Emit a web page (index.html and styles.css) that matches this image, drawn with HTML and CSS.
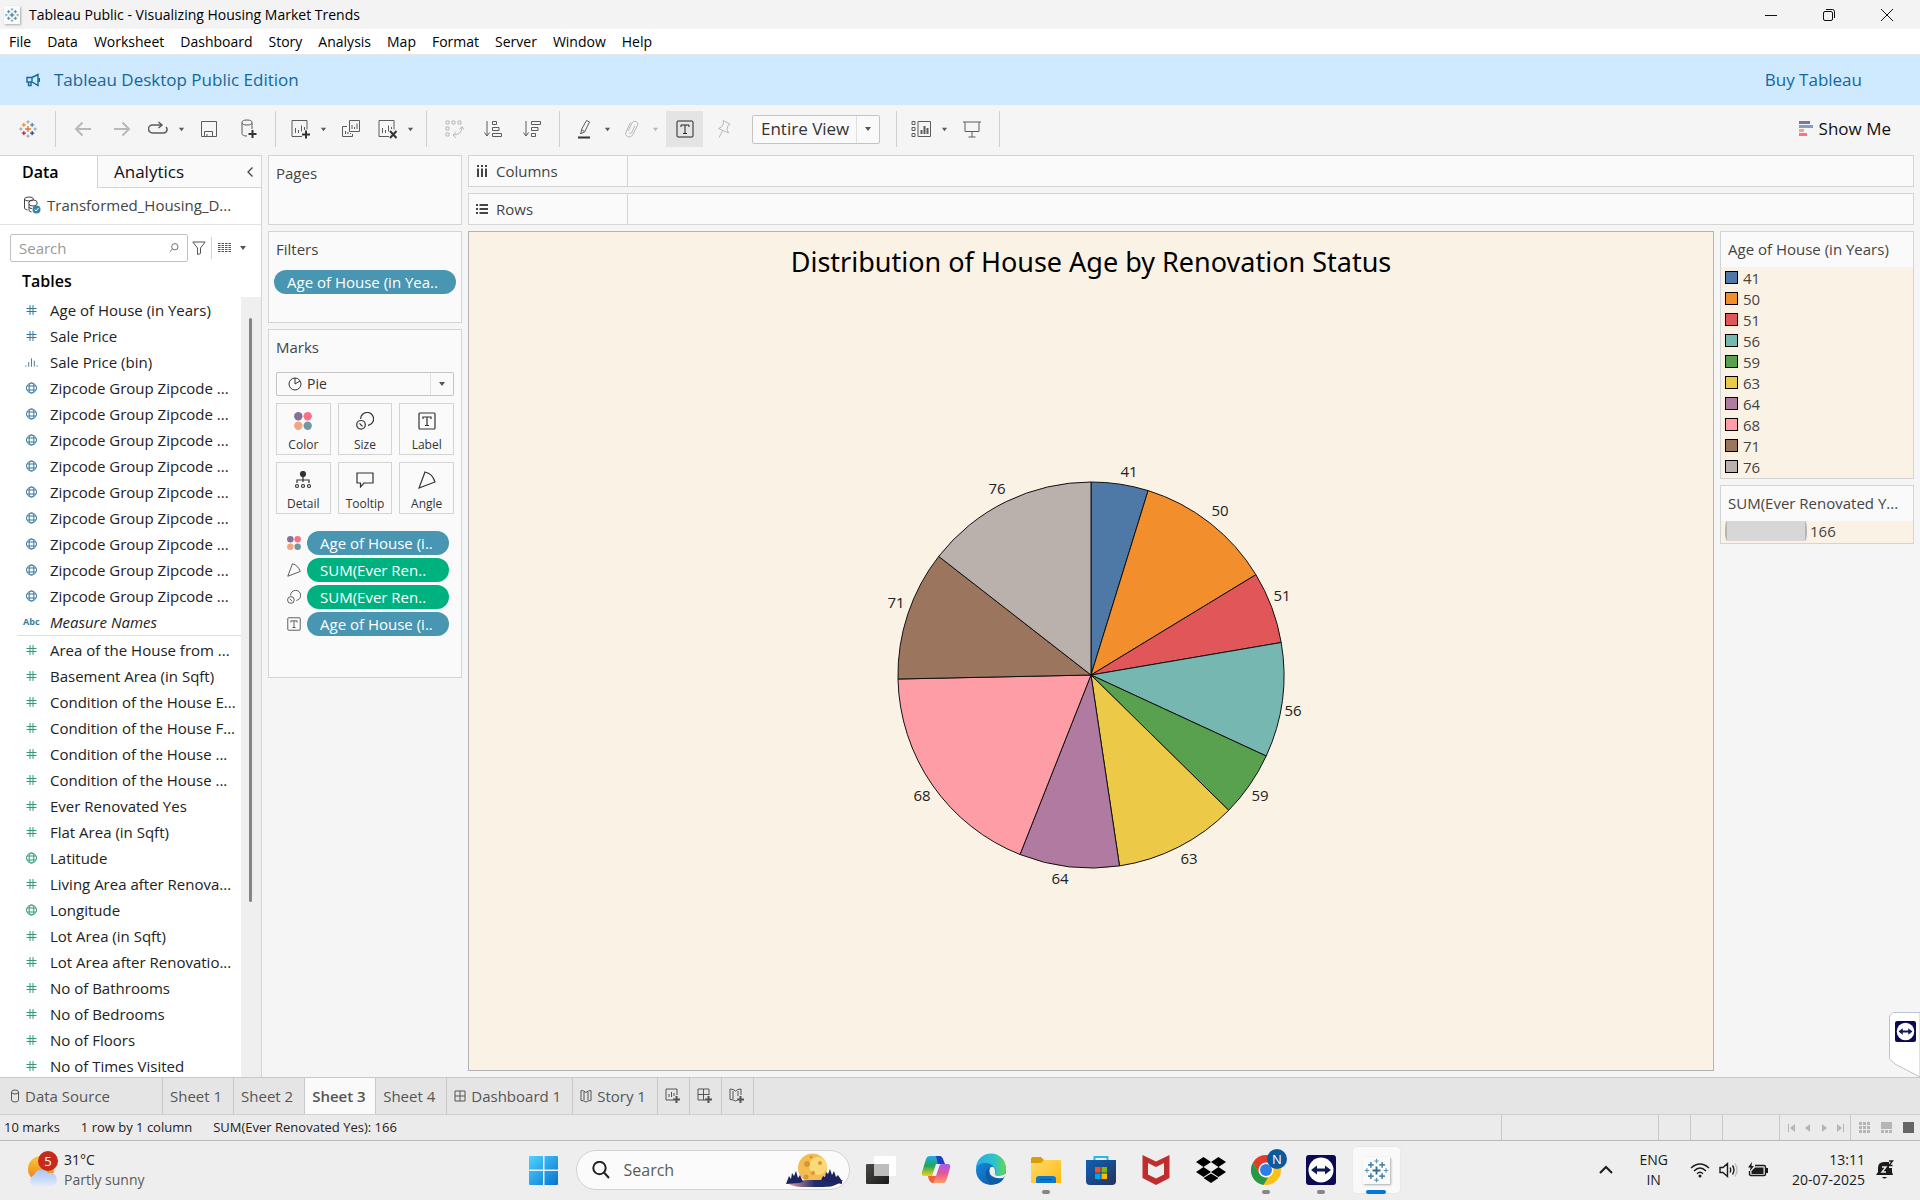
FILE: index.html
```html
<!DOCTYPE html>
<html lang="en">
<head>
<meta charset="utf-8">
<title>Tableau Public - Visualizing Housing Market Trends</title>
<link rel="stylesheet" href="styles.css">
</head>
<body>
<svg class="defs" aria-hidden="true">
  <defs>
    <linearGradient id="win" x1="0" y1="0" x2="1" y2="1"><stop offset="0" stop-color="#4fd3ff"/><stop offset="1" stop-color="#0573d2"/></linearGradient>
    <linearGradient id="sun" x1="0" y1="0" x2="0" y2="1"><stop offset="0" stop-color="#f7c93c"/><stop offset="1" stop-color="#f07a12"/></linearGradient>
    <linearGradient id="cloud" x1="0" y1="0" x2="0" y2="1"><stop offset="0" stop-color="#a9c4f5"/><stop offset="1" stop-color="#dfeafd"/></linearGradient>
    <linearGradient id="cop1" x1="0" y1="0" x2="0" y2="1"><stop offset="0" stop-color="#1faaf0"/><stop offset=".5" stop-color="#23a55a"/><stop offset="1" stop-color="#f5d118"/></linearGradient>
    <linearGradient id="cop2" x1="0" y1="0" x2="0" y2="1"><stop offset="0" stop-color="#a35cf0"/><stop offset=".5" stop-color="#e8559a"/><stop offset="1" stop-color="#fba05c"/></linearGradient>
    <linearGradient id="edge1" x1="0" y1="0" x2="1" y2="0"><stop offset="0" stop-color="#2aa8e8"/><stop offset=".6" stop-color="#2cc3cf"/><stop offset="1" stop-color="#68d64f"/></linearGradient>
    <linearGradient id="edge2" x1="0" y1="0" x2="1" y2="1"><stop offset="0" stop-color="#1591e0"/><stop offset="1" stop-color="#0b4f9e"/></linearGradient>
    <linearGradient id="fold" x1="0" y1="0" x2="1" y2="1"><stop offset="0" stop-color="#ffdc6b"/><stop offset="1" stop-color="#fdb913"/></linearGradient>
    <linearGradient id="store" x1="0" y1="0" x2="1" y2="1"><stop offset="0" stop-color="#0d62b5"/><stop offset="1" stop-color="#25325c"/></linearGradient>
    <linearGradient id="ground" x1="0" y1="0" x2="1" y2="0"><stop offset="0" stop-color="#eda79b"/><stop offset=".5" stop-color="#202c6c"/><stop offset="1" stop-color="#1b2562"/></linearGradient>
    <linearGradient id="dark" x1="0" y1="0" x2="1" y2="1"><stop offset="0" stop-color="#4a4a46"/><stop offset="1" stop-color="#1a1a19"/></linearGradient>
  </defs>
  <symbol id="i-hash" viewBox="0 0 12 12"><path d="M4.500 1v10M7.500 1v10M1 4.500h10M1 7.500h10"/></symbol>
  <symbol id="i-globe" viewBox="0 0 12 12"><circle cx="6" cy="6" r="5"/><ellipse cx="6" cy="6" rx="2.4" ry="5"/><path d="M1.6 4h8.8M1.6 8h8.8"/></symbol>
  <symbol id="i-bin" viewBox="0 0 14 12"><path d="M1 9.5v1.5M4 6v5M7 2v9M10 4.500v6.500M13 9.500v1.500"/></symbol>
  <symbol id="i-down" viewBox="0 0 8 8"><path d="M1 2h6L4 6z"/></symbol>
  <symbol id="i-tableau" viewBox="0 0 24 24">
    <path d="M12 8.500v7M8.500 12h7" stroke="var(--c1)" stroke-width="1.600"/>
    <path d="M7 4.500v5M4.500 7h5" stroke="var(--c2)" stroke-width="1.400"/>
    <path d="M17 4.500v5M14.500 7h5" stroke="var(--c3)" stroke-width="1.400"/>
    <path d="M7 14.500v5M4.500 17h5" stroke="var(--c4)" stroke-width="1.400"/>
    <path d="M17 14.500v5M14.500 17h5" stroke="var(--c5)" stroke-width="1.400"/>
    <path d="M12 1.500v4M10 3.500h4M12 18.500v4M10 20.500h4M3.500 10v4M1.500 12h4M20.500 10v4M18.500 12h4" stroke="var(--c6)"/>
  </symbol>
  <symbol id="i-dots" viewBox="0 0 18 18"><g stroke="none"><circle cx="4.300" cy="4.300" r="4.200" fill="#857097"/><circle cx="13.700" cy="4.300" r="4.200" fill="#fb7083"/><circle cx="4.300" cy="13.700" r="4.200" fill="#f3a681"/><circle cx="13.700" cy="13.700" r="4.200" fill="#6f98a3"/></g></symbol>
  <symbol id="i-size" viewBox="0 0 18 18"><path d="M4.600 7A6.500 6.500 0 1 1 12 13.400"/><circle cx="5" cy="12.800" r="4.300"/><path d="M3.500 11.300l3 3"/></symbol>
  <symbol id="i-label" viewBox="0 0 18 18"><rect x="1" y="1" width="16" height="16" rx="1"/><path d="M5 7V5h8v2M9 5v8.500M7 13.500h4"/></symbol>
  <symbol id="i-detail" viewBox="0 0 18 18"><circle cx="9" cy="3" r="2.500" fill="#333"/><path d="M9 5v6M3 12V9h12v3"/><circle cx="3" cy="15" r="1.500"/><circle cx="9" cy="15" r="1.500"/><circle cx="15" cy="15" r="1.500"/></symbol>
  <symbol id="i-tip" viewBox="0 0 18 18"><path d="M1 2h16v10H8l-3.500 4v-4H1z"/></symbol>
  <symbol id="i-angle" viewBox="0 0 18 18"><path d="M7 1L1 17l16-6C15.500 6 12 2 7 1z"/></symbol>
  <symbol id="i-team" viewBox="0 0 30 30"><rect width="30" height="30" rx="3" fill="#090a52"/><circle cx="15" cy="15" r="12.500" fill="#fff"/><path d="M5 15l6-4.500v3h8v-3l6 4.500-6 4.500v-3h-8v3z" fill="#111a55"/></symbol>
  <symbol id="i-search" viewBox="0 0 18 18"><circle cx="7.500" cy="7" r="6.200"/><path d="M12 11.500l5 5.500"/></symbol>
</svg>

<header class="titlebar">
  <svg class="app-icon blue-logo" viewBox="0 0 24 24"><use href="#i-tableau"/></svg>
  <h1>Tableau Public - Visualizing Housing Market Trends</h1>
  <div class="window-buttons">
    <button aria-label="Minimize"><svg viewBox="0 0 12 12"><path d="M0 6.500h12"/></svg></button>
    <button aria-label="Restore"><svg viewBox="0 0 12 12"><rect x=".5" y="2.500" width="9" height="9" rx="1.500"/><path d="M3 .5h6.500a2 2 0 0 1 2 2V9"/></svg></button>
    <button aria-label="Close"><svg viewBox="0 0 12 12"><path d="M0 0l12 12M12 0L0 12"/></svg></button>
  </div>
</header>
<nav class="menubar">
  <button>File</button><button>Data</button><button>Worksheet</button><button>Dashboard</button><button>Story</button><button>Analysis</button><button>Map</button><button>Format</button><button>Server</button><button>Window</button><button>Help</button>
</nav>
<div class="banner">
  <svg viewBox="0 0 14 14"><path d="M1 4.500h5L12 1.500v11L6 9H1zM2.500 9v3.500h2.500V9M13.500 5v4M6 4.500V9"/></svg>
  <span>Tableau Desktop Public Edition</span>
  <a href="#buy">Buy Tableau</a>
</div>

<div class="toolbar">
  <div class="group"><button aria-label="Start page"><svg class="color-logo" viewBox="0 0 24 24"><use href="#i-tableau"/></svg></button></div>
  <div class="group">
    <button aria-label="Undo" class="off heavy"><svg viewBox="0 0 20 20"><path d="M18 10H3M9.500 3.500L3 10l6.500 6.500"/></svg></button>
    <button aria-label="Redo" class="off heavy"><svg viewBox="0 0 20 20"><path d="M2 10h15M10.500 3.500L17 10l-6.500 6.500"/></svg></button>
    <button aria-label="Replay" class="has-menu mid"><svg viewBox="0 0 20 20"><path d="M13 6H4.500a3.500 3.500 0 0 0 0 8h11a3.500 3.500 0 0 0 2.500-6M10.500 3L14 6l-3.500 3"/></svg><svg class="caret" viewBox="0 0 8 8"><use href="#i-down"/></svg></button>
    <button aria-label="Save"><svg viewBox="0 0 20 20"><path d="M2.500 2.500h15v15h-15zM5.500 17.500v-5h8v5M8 15v2.500"/></svg></button>
    <button aria-label="New data source"><svg viewBox="0 0 20 20"><ellipse cx="9" cy="3.500" rx="5" ry="2.500"/><path d="M4 3.500v11q0 2.500 5 2.500M14 3.500V10"/><path class="strong" d="M14.500 11v8M10.500 15h8"/></svg></button>
  </div>
  <div class="group">
    <button aria-label="New worksheet" class="has-menu"><svg viewBox="0 0 20 20"><path d="M12 17.500H2v-16h15v9M5.500 9v5M8.500 11v3M11.500 6.500v6M14.500 8v3"/><path class="strong" d="M16 11.500v8M12 15.500h8"/></svg><svg class="caret" viewBox="0 0 8 8"><use href="#i-down"/></svg></button>
    <button aria-label="Duplicate"><svg viewBox="0 0 20 20"><path d="M8.500 1.500h10v11h-10zM6 7.500H1.500v10h10V15M11 6v4M13.500 8v2M16 4.500V10M4.500 12v3M7 13v2M9.500 14v1"/></svg></button>
    <button aria-label="Clear sheet" class="has-menu"><svg viewBox="0 0 20 20"><path d="M12 17.500H2v-16h15v9M5.500 9v5M8.500 11v3M11.500 6.500v6M14.500 8v2"/><path class="strong" d="M13 12l6.500 7M19.500 12L13 19"/></svg><svg class="caret" viewBox="0 0 8 8"><use href="#i-down"/></svg></button>
  </div>
  <div class="group">
    <button aria-label="Swap rows and columns" class="off"><svg viewBox="0 0 20 20"><path d="M2 2h3v3H2zM8 2h3v3H8zM14 2h3v3h-3zM2 8h3v3H2zM2 14h3v3H2zM18 8q0 8-9 8M12 13l-3 3 3 3M15.500 10.500l2.500-3 2 3"/></svg></button>
    <button aria-label="Sort ascending"><svg viewBox="0 0 20 20"><path d="M4 2v15M1.500 13.500L4 17l2.500-3.500M9.500 2.500h4v3h-4zM9.500 8.500h6.500v3H9.500zM9.500 14.500h9v3h-9z"/></svg></button>
    <button aria-label="Sort descending"><svg viewBox="0 0 20 20"><path d="M4 2v15M1.500 13.500L4 17l2.500-3.500M9.500 2.500h9v3h-9zM9.500 8.500h6.500v3H9.500zM9.500 14.500h4v3h-4z"/></svg></button>
  </div>
  <div class="group">
    <button aria-label="Highlight" class="has-menu"><svg viewBox="0 0 20 20"><path d="M12.500 1.500l3 1.500-5 10-3.500 1.500.5-4zM7.500 10.500l3 2M6 15l1-1"/><path class="strong" d="M4 18.500h12"/></svg><svg class="caret" viewBox="0 0 8 8"><use href="#i-down"/></svg></button>
    <button aria-label="Group members" class="has-menu off"><svg viewBox="0 0 20 20"><path d="M6 12l4-8a3 3 0 0 1 5.500 2.500L10.500 16A3.500 3.500 0 0 1 4 13l4.500-9.500M7 13.500a1.500 1.500 0 0 0 2.500.5L13 6.500"/></svg><svg class="caret" viewBox="0 0 8 8"><use href="#i-down"/></svg></button>
    <button aria-label="Show mark labels" aria-pressed="true" class="pressed"><svg viewBox="0 0 18 18"><use href="#i-label"/></svg></button>
    <button aria-label="Fix axes" class="off"><svg viewBox="0 0 20 20"><path d="M10 1.500l7 3.500-2 1.500-1 4 1.500 3.500-10-4.500 3-1.500 2-4zM9.500 12L6 18.500"/></svg></button>
    <label class="select fit"><select aria-label="Fit"><option>Entire View</option></select><svg viewBox="0 0 8 8"><use href="#i-down"/></svg></label>
  </div>
  <div class="group">
    <button aria-label="Show or hide cards" class="has-menu"><svg viewBox="0 0 20 20"><path d="M7 2.500h12.500v15H7zM1 2.500h3v3H1zM1 8.500h3v3H1zM1 14.500h3v3H1z"/><path class="thick" d="M10.500 11v4M13.500 7v8M16.500 9v6"/></svg><svg class="caret" viewBox="0 0 8 8"><use href="#i-down"/></svg></button>
    <button aria-label="Presentation mode"><svg viewBox="0 0 20 20"><path d="M1 3h18M3 3v9.500h14V3M10 12.500V18M6.500 18h7"/></svg></button>
  </div>
  <button class="show-me"><svg viewBox="0 0 14 16"><path fill="#857097" d="M0 0h11v3H0z"/><path fill="#7da0cc" d="M0 4h14v3H0z"/><path fill="#f3a681" d="M0 8h5v3H0z"/><path fill="#fb7083" d="M0 12h8v3H0z"/></svg>Show Me</button>
</div>

<main class="workspace">
  <aside class="data-pane">
    <div class="pane-tabs">
      <button class="active">Data</button>
      <button>Analytics<svg viewBox="0 0 8 12"><path d="M6.500 1.500L2 6l4.500 4.500"/></svg></button>
    </div>
    <div class="source">
      <svg viewBox="0 0 18 18"><ellipse cx="6" cy="3" rx="4.500" ry="2"/><path d="M1.500 3v9q0 1.500 3 2M6 8q0 2 4 2t4-2V6q0-2-4-2T6 6v8q0 1.500 2.500 2M6 11q0 1.500 3 1.500"/><circle cx="13.500" cy="13.500" r="4" fill="#3a83a8" stroke="none"/><path d="M11.500 13.500l1.500 1.500 2.500-3" stroke="#fff"/></svg>
      <span>Transformed_Housing_D...</span>
    </div>
    <div class="find">
      <div class="find-box"><input type="text" placeholder="Search" aria-label="Search fields"><svg viewBox="0 0 12 12"><circle cx="7" cy="4.500" r="3.800"/><path d="M4.300 7.200L.8 10.700"/></svg></div>
      <button aria-label="Filter fields"><svg viewBox="0 0 14 14"><path d="M.8 1h12.400L8.500 7v5.500l-3 1V7z"/></svg></button>
      <button aria-label="View options" class="views"><svg viewBox="0 0 13 10"><path stroke-dasharray="2.500 1" d="M0 .5h13M0 2.500h13M0 4.500h13M0 6.500h13M0 8.500h13"/></svg><svg class="caret" viewBox="0 0 8 8"><use href="#i-down"/></svg></button>
    </div>
    <h2>Tables</h2>
    <div class="field-area">
      <div class="fields">
        <ul class="dimensions">
          <li><svg><use href="#i-hash"/></svg>Age of House (in Years)</li>
          <li><svg><use href="#i-hash"/></svg>Sale Price</li>
          <li><svg><use href="#i-bin"/></svg>Sale Price (bin)</li>
          <li><svg><use href="#i-globe"/></svg>Zipcode Group Zipcode ...</li>
          <li><svg><use href="#i-globe"/></svg>Zipcode Group Zipcode ...</li>
          <li><svg><use href="#i-globe"/></svg>Zipcode Group Zipcode ...</li>
          <li><svg><use href="#i-globe"/></svg>Zipcode Group Zipcode ...</li>
          <li><svg><use href="#i-globe"/></svg>Zipcode Group Zipcode ...</li>
          <li><svg><use href="#i-globe"/></svg>Zipcode Group Zipcode ...</li>
          <li><svg><use href="#i-globe"/></svg>Zipcode Group Zipcode ...</li>
          <li><svg><use href="#i-globe"/></svg>Zipcode Group Zipcode ...</li>
          <li><svg><use href="#i-globe"/></svg>Zipcode Group Zipcode ...</li>
          <li><b>Abc</b><i>Measure Names</i></li>
        </ul>
        <ul class="measures">
          <li><svg><use href="#i-hash"/></svg>Area of the House from ...</li>
          <li><svg><use href="#i-hash"/></svg>Basement Area (in Sqft)</li>
          <li><svg><use href="#i-hash"/></svg>Condition of the House E...</li>
          <li><svg><use href="#i-hash"/></svg>Condition of the House F...</li>
          <li><svg><use href="#i-hash"/></svg>Condition of the House ...</li>
          <li><svg><use href="#i-hash"/></svg>Condition of the House ...</li>
          <li><svg><use href="#i-hash"/></svg>Ever Renovated Yes</li>
          <li><svg><use href="#i-hash"/></svg>Flat Area (in Sqft)</li>
          <li><svg><use href="#i-globe"/></svg>Latitude</li>
          <li><svg><use href="#i-hash"/></svg>Living Area after Renova...</li>
          <li><svg><use href="#i-globe"/></svg>Longitude</li>
          <li><svg><use href="#i-hash"/></svg>Lot Area (in Sqft)</li>
          <li><svg><use href="#i-hash"/></svg>Lot Area after Renovatio...</li>
          <li><svg><use href="#i-hash"/></svg>No of Bathrooms</li>
          <li><svg><use href="#i-hash"/></svg>No of Bedrooms</li>
          <li><svg><use href="#i-hash"/></svg>No of Floors</li>
          <li><svg><use href="#i-hash"/></svg>No of Times Visited</li>
        </ul>
      </div>
      <div class="scroll-track"><div class="scroll-thumb"></div></div>
    </div>
  </aside>

  <section class="cards">
    <div class="card pages"><h3>Pages</h3></div>
    <div class="card filters"><h3>Filters</h3><button class="pill">Age of House (in Yea..</button></div>
    <div class="card marks">
      <h3>Marks</h3>
      <label class="select mark-type"><svg class="pie-glyph" viewBox="0 0 14 14"><circle cx="7" cy="7" r="6"/><path d="M7 7V1M7 7l5-3"/></svg><select aria-label="Mark type"><option>Pie</option></select><svg viewBox="0 0 8 8"><use href="#i-down"/></svg></label>
      <div class="mark-buttons">
        <button><svg><use href="#i-dots"/></svg>Color</button>
        <button><svg><use href="#i-size"/></svg>Size</button>
        <button><svg><use href="#i-label"/></svg>Label</button>
        <button><svg><use href="#i-detail"/></svg>Detail</button>
        <button><svg><use href="#i-tip"/></svg>Tooltip</button>
        <button><svg><use href="#i-angle"/></svg>Angle</button>
      </div>
      <ul class="encodings">
        <li><svg><use href="#i-dots"/></svg><button class="pill">Age of House (i..</button></li>
        <li><svg><use href="#i-angle"/></svg><button class="pill green">SUM(Ever Ren..</button></li>
        <li><svg><use href="#i-size"/></svg><button class="pill green">SUM(Ever Ren..</button></li>
        <li><svg><use href="#i-label"/></svg><button class="pill">Age of House (i..</button></li>
      </ul>
    </div>
  </section>

  <section class="view">
    <div class="shelf"><div class="shelf-name"><svg viewBox="0 0 12 12"><path d="M2 0v2M6 0v2M10 0v2M2 3.500V12M6 3.500V12M10 3.500V12"/></svg>Columns</div></div>
    <div class="shelf"><div class="shelf-name"><svg viewBox="0 0 12 12"><path d="M0 2h2M0 6h2M0 10h2M3.500 2H12M3.500 6H12M3.500 10H12"/></svg>Rows</div></div>
    <div class="view-body">
      <div class="canvas">
        <h2>Distribution of House Age by Renovation Status</h2>
        <div class="plot">
          <svg class="pie" viewBox="-220 -220 440 440" role="img" aria-label="Pie chart of house age by renovation status">
            <g class="slices">
              <path fill="#4e79a7" d="M0 0V-193A193 193 0 0 1 57.100-184.400z"/>
              <path fill="#f28e2b" d="M0 0L57.100-184.400A193 193 0 0 1 164.900-100.300z"/>
              <path fill="#e15759" d="M0 0L164.900-100.300A193 193 0 0 1 190.200-32.500z"/>
              <path fill="#76b7b2" d="M0 0L190.200-32.500A193 193 0 0 1 175.200 81z"/>
              <path fill="#59a14f" d="M0 0L175.200 81A193 193 0 0 1 137.700 135.300z"/>
              <path fill="#edc948" d="M0 0L137.700 135.300A193 193 0 0 1 28.500 190.900z"/>
              <path fill="#b07aa1" d="M0 0L28.500 190.900A193 193 0 0 1-71 179.500z"/>
              <path fill="#ff9da7" d="M0 0L-71 179.500A193 193 0 0 1-193 4z"/>
              <path fill="#9c755f" d="M0 0L-193 4A193 193 0 0 1-152.300-118.600z"/>
              <path fill="#bab0ac" d="M0 0L-152.300-118.600A193 193 0 0 1 0-193z"/>
            </g>
            <g class="labels">
              <text x="38" y="-198">41</text><text x="129" y="-159">50</text><text x="191" y="-74">51</text><text x="202" y="41">56</text><text x="169" y="126">59</text><text x="98" y="189">63</text><text x="-31" y="209">64</text><text x="-169" y="126">68</text><text x="-195" y="-67">71</text><text x="-94" y="-181">76</text>
            </g>
          </svg>
        </div>
      </div>
      <aside class="legends">
        <div class="legend">
          <h3>Age of House (in Years)</h3>
          <ul>
            <li><i class="s41"></i>41</li><li><i class="s50"></i>50</li><li><i class="s51"></i>51</li><li><i class="s56"></i>56</li><li><i class="s59"></i>59</li><li><i class="s63"></i>63</li><li><i class="s64"></i>64</li><li><i class="s68"></i>68</li><li><i class="s71"></i>71</li><li><i class="s76"></i>76</li>
          </ul>
        </div>
        <div class="legend">
          <h3>SUM(Ever Renovated Y...</h3>
          <div class="size-key"><span></span>166</div>
        </div>
      </aside>
    </div>
  </section>
  <button class="dock-tab" aria-label="TeamViewer"><svg class="dock-shape" viewBox="0 0 31 65"><path d="M31 .5H4L.5 4v43L6 52l25 13z"/></svg><svg class="dock-icon" viewBox="0 0 30 30"><use href="#i-team"/></svg></button>
</main>

<nav class="sheet-tabs">
  <button class="wide"><svg viewBox="0 0 12 14"><ellipse cx="6" cy="3" rx="3.500" ry="2"/><path d="M2.500 3v8q0 2 3.500 2t3.500-2V3"/></svg>Data Source</button>
  <button>Sheet 1</button><button>Sheet 2</button><button class="active">Sheet 3</button><button>Sheet 4</button>
  <button><svg viewBox="0 0 12 14"><path d="M1 2h10v10H1zM6 2v10M1 7h10"/></svg>Dashboard 1</button>
  <button><svg viewBox="0 0 12 14"><path d="M1 1.500q3 0 5 2 2-2 5-2v10q-3 0-5 1.500-2-1.500-5-1.500zM4 3v8M8 3v8"/></svg>Story 1</button>
  <button class="new" aria-label="New worksheet"><svg viewBox="0 0 16 16"><path d="M8 12H1V1h11v6M4 6v3M6.500 4v5M9 5v3"/><path class="strong" d="M11.500 8v7M8 11.500h7"/></svg></button>
  <button class="new" aria-label="New dashboard"><svg viewBox="0 0 16 16"><path d="M8 12H1V1h11v6M6.500 1v11M1 6.500h11"/><path class="strong" d="M11.500 8v7M8 11.500h7"/></svg></button>
  <button class="new" aria-label="New story"><svg viewBox="0 0 16 16"><path d="M8 12.500q-1 0-1.500.5-2-1.500-5.500-1.500V1q3.500 0 5.500 2 2-2 5.500-2v6M4 3v8M9 3v5"/><path class="strong" d="M11.500 8v7M8 11.500h7"/></svg></button>
</nav>
<footer class="status">
  <span>10 marks</span><span>1 row by 1 column</span><span>SUM(Ever Renovated Yes): 166</span>
  <div class="status-cells">
    <div class="c1"></div><div class="c2"></div><div class="c2"></div><div class="c3"></div>
    <div class="pager">
      <button aria-label="First"><svg viewBox="0 0 8 8"><path d="M0 0h1v8H0zM7 0v8L2 4z"/></svg></button><button aria-label="Previous"><svg viewBox="0 0 8 8"><path d="M6 0v8L1 4z"/></svg></button><button aria-label="Next"><svg viewBox="0 0 8 8"><path d="M2 0v8l5-4z"/></svg></button><button aria-label="Last"><svg viewBox="0 0 8 8"><path d="M7 0h1v8H7zM1 0v8l5-4z"/></svg></button>
    </div>
    <div class="sorter">
      <button aria-label="Sheet sorter"><svg viewBox="0 0 11 11"><path d="M0 0h3v3H0zM4 0h3v3H4zM8 0h3v3H8zM0 4h3v3H0zM4 4h3v3H4zM8 4h3v3H8zM0 8h3v3H0zM4 8h3v3H4zM8 8h3v3H8z"/></svg></button><button aria-label="Filmstrip"><svg viewBox="0 0 11 11"><path d="M0 0h11v7H0zM0 8h3v3H0zM4 8h3v3H4zM8 8h3v3H8z"/></svg></button><button class="on" aria-label="Tabs"><svg viewBox="0 0 11 11"><path d="M0 0h11v11H0z"/></svg></button>
    </div>
  </div>
</footer>

<div class="taskbar">
  <button class="weather">
    <svg viewBox="0 0 34 40"><circle cx="14" cy="19" r="13" fill="url(#sun)"/><path d="M7 36a6 6 0 0 1 0-11 8 8 0 0 1 14-2 6.500 6.500 0 0 1 4 13z" fill="url(#cloud)"/><circle cx="21" cy="11" r="10" fill="#c42b1c"/><text x="21" y="16">5</text></svg>
    <span><b>31°C</b><small>Partly sunny</small></span>
  </button>
  <div class="apps">
    <button aria-label="Start"><svg viewBox="0 0 30 30"><path fill="url(#win)" d="M0 2a1 1 0 0 1 1-1h13v13.500H0zM15.500 1H28a1 1 0 0 1 1 1v12.500H15.500zM0 16h14v14H1a1 1 0 0 1-1-1zM15.500 16H29v13a1 1 0 0 1-1 1H15.500z"/></svg></button>
    <label class="task-search"><svg class="glass" viewBox="0 0 18 18"><use href="#i-search"/></svg><input type="text" placeholder="Search" aria-label="Search Windows">
      <svg class="moon" viewBox="0 0 57 34"><circle cx="26.500" cy="15" r="14.500" fill="#f3bd52"/><circle cx="32" cy="13" r="9" fill="#fbd878"/><g fill="#d99538"><circle cx="21" cy="11" r="3"/><circle cx="34" cy="10" r="2"/><circle cx="27" cy="20" r="2"/><circle cx="25" cy="4" r="1.500"/><circle cx="20" cy="24" r="2.500"/></g><path fill="url(#ground)" d="M1 30q8-3 24-3h32q-4 4-12 6.500-12 1-28 .5-10 0-16-4z"/><path fill="#1b2461" d="M0 31l3-8 2 3 1-6 2 3 2-5 2 7 2-3 3 7-4 1zM35 27l2-4 2 1 1-5 2 2 2-5 2 6 2-4 2 6 2-2 4 6v3z"/></svg>
    </label>
    <button aria-label="Task view"><svg viewBox="0 0 30 30"><rect x="0" y="9" width="23" height="20" rx="1" fill="url(#dark)"/><rect x="8" y="1" width="22" height="20" rx="1" fill="#fff"/><path d="M8 9h15v12H8z" fill="#bdbdbd"/></svg></button>
    <button aria-label="Copilot"><svg viewBox="0 0 30 30"><path fill="url(#cop1)" d="M9 1h11l-5 17q-1 3-4 3H3q-3 0-2-4L5 4q1-3 4-3z"/><path fill="#1f3fc4" d="M15 1h3q3 0 4 3l2 5h-7z"/><path fill="url(#cop2)" d="M22 9h5q3 0 2 4l-3.500 12q-1 3-4 3H11l5.500-16q1-3 5.500-3z"/><path fill="#f2603d" d="M7 21h8l-3 7q-4 0-5-7z"/><path fill="#f0f2f6" d="M15 9h4l-4 12h-4z"/></svg></button>
    <button aria-label="Edge"><svg viewBox="0 0 30 30"><circle cx="15" cy="15" r="15" fill="url(#edge2)"/><path fill="url(#edge1)" d="M0 13A15 15 0 0 1 30 14q0 7-7 7-5 0-4-3 2-3-1-6-3-4-9-4-6 0-9 5z"/><path fill="#0a5ba8" d="M10 17q-1 8 6 12 8 1 12-6-10 4-14-2-2-4 0-8-4 1-4 4z"/><path fill="#eee" d="M14 13q2-2 4-.5 2 2.500 1 5.500-1 3 4 3 4 0 7-3-1 4-3 5-10 1-13-4-1-4 0-6z"/></svg></button>
    <button aria-label="File Explorer" class="running"><svg viewBox="0 0 30 30"><path fill="#dc9c07" d="M0 4q0-2 2-2h8l3 3h16v5H0z"/><path fill="url(#fold)" d="M0 8h10l3-3h16a1 1 0 0 1 1 1v22H0z"/><path fill="#0f79c9" d="M5 28v-4q0-3 3-3h14q3 0 3 3v4z"/><path stroke="#0a4d8a" d="M9 24.500h12"/></svg></button>
    <button aria-label="Microsoft Store"><svg viewBox="0 0 30 30"><path fill="none" stroke="#28b8ea" stroke-width="2" d="M8.500 6V2h13v4"/><path fill="url(#store)" d="M0 5h30v21q0 4-4 4H4q-4 0-4-4z"/><path fill="#f25022" d="M9 12h5.500v5.500H9z"/><path fill="#7fba00" d="M15.500 12H21v5.500h-5.500z"/><path fill="#00a4ef" d="M9 18.500h5.500V24H9z"/><path fill="#ffb900" d="M15.500 18.500H21V24h-5.500z"/></svg></button>
    <button aria-label="McAfee"><svg viewBox="0 0 30 30"><path fill="#c12c2c" fill-rule="evenodd" d="M1.500 0L15 6.500 28.500 0v23L15 30 1.500 23zM7 8v11.500l8 4 8-4V8l-8 4z"/></svg></button>
    <button aria-label="Dropbox"><svg viewBox="0 0 30 30"><path fill="#000" d="M7.500 2L15 7l-7.500 5L0 7zM22.500 2L30 7l-7.500 5L15 7zM7.500 12l7.500 5-7.500 5L0 17zM22.500 12l7.500 5-7.500 5-7.500-5zM15 18.500l7.500 4.500L15 28l-7.500-5z"/></svg></button>
    <button aria-label="Chrome" class="running"><svg class="spill" viewBox="0 0 30 30"><circle cx="15" cy="15" r="15" fill="#fbc116"/><path fill="#e33b2e" d="M2 7.500A15 15 0 0 1 28 7.500H15L8.500 19z"/><path fill="#279847" d="M2 7.500l6.500 11.300L15 22.500h2L12.500 30A15 15 0 0 1 2 7.500z"/><circle cx="15" cy="15" r="7.500" fill="#fff"/><circle cx="15" cy="15" r="6" fill="#2f7de8"/><circle cx="26" cy="4" r="10" fill="#0d599d"/><text x="26" y="9">N</text></svg></button>
    <button aria-label="TeamViewer" class="running"><svg viewBox="0 0 30 30"><use href="#i-team"/></svg></button>
    <button aria-label="Tableau" class="running current"><svg class="blue-logo" viewBox="0 0 24 24"><use href="#i-tableau"/></svg></button>
  </div>
  <div class="tray">
    <button aria-label="Hidden icons"><svg viewBox="0 0 14 14"><path d="M1 10l6-6 6 6"/></svg></button>
    <button class="lang">ENG<br>IN</button>
    <button class="quick" aria-label="Network, sound, battery">
      <svg viewBox="0 0 20 16"><path d="M1 6q9-8 18 0M4 9q6-6 12 0M7 11.800q3-3 6 0"/><circle cx="10" cy="14" r="1.500" fill="#1b1b1b" stroke="none"/></svg>
      <svg viewBox="0 0 20 16"><path d="M1 5.500h3L8.500 1.500v13L4 10.500H1zM11 5.500q1.500 2.500 0 5M13.500 3.500q3 4.500 0 9"/><path stroke="#bbb" d="M16 1.500q4 6.500 0 13"/></svg>
      <svg viewBox="0 0 20 16"><path d="M7 3.500h9q1.500 0 1.500 1.500v7q0 1.500-1.500 1.500H3Q1.500 13.500 1.500 12V9"/><path fill="#1b1b1b" stroke="none" d="M7 5.500h8.500v6.500h-12V9zM18 6h2v5h-2zM4 0L0 5.500h2.500L2 9l4-5H3.500z"/></svg>
    </button>
    <button class="clock">13:11<br>20-07-2025</button>
    <button aria-label="Notifications"><svg viewBox="0 0 18 20"><path fill="#1b1b1b" stroke="none" d="M0 15l2-3V8q0-6 6-6h5v6h3v4l1 3zM6 17h5q-2.500 3-5 0z"/><path stroke="#eee" d="M6 7h4l-4 5h4"/><path d="M13 1h3.500L13 5.500h3.500"/></svg></button>
  </div>
</div>
</body>
</html>
```

FILE: styles.css
```css
* { box-sizing: border-box; }
:root {
  --ui: "Open Sans", "Noto Sans", sans-serif;
  --line: #d4d4d4;
  --cream: #faf3e5;
}
body {
  margin: 0;
  height: 100vh;
  display: flex;
  flex-direction: column;
  overflow: hidden;
  background: #f5f5f5;
  color: #333;
  font: 400 15px/20px var(--ui);
}
h1, h2, h3, ul { margin: 0; padding: 0; font-size: inherit; font-weight: inherit; list-style: none; }
button, input, select {
  margin: 0;
  padding: 0;
  border: 0;
  background: none;
  color: inherit;
  font: inherit;
}
svg { display: block; flex: none; fill: none; stroke: currentColor; }
.defs { position: absolute; width: 0; height: 0; }
#i-down path { fill: currentColor; stroke: none; }

.blue-logo { --c1: #2f6c98; --c2: #4b86ab; --c3: #4b86ab; --c4: #4b86ab; --c5: #4b86ab; --c6: #5c94b6; background: #fafafa; box-shadow: 1px 1px 2px #aaa; }
.color-logo { --c1: #eb7129; --c2: #eb912c; --c3: #59879b; --c4: #c72037; --c5: #1f457e; --c6: #7b91a9; }

.titlebar { display: flex; align-items: center; height: 29px; padding: 0 4px; background: #f3f3f3; flex: none; }
.app-icon { width: 16px; height: 18px; }
.titlebar h1 { flex: 1; margin-left: 9px; color: #000; font-size: 14px; }
.window-buttons { display: flex; }
.window-buttons button { width: 58px; height: 29px; display: grid; place-items: center; color: #111; }
.window-buttons svg { width: 12px; height: 12px; }

.menubar { display: flex; gap: 16px; height: 26px; padding: 0 9px; align-items: center; background: #fff; border-bottom: 1px solid #e6e6e6; color: #000; font-size: 14px; flex: none; }

.banner { display: flex; align-items: center; height: 50px; padding: 0 58px 0 26px; background: #cfe9ff; color: #13689b; font-size: 17px; flex: none; }
.banner svg { width: 14px; height: 14px; margin-right: 14px; stroke-width: 1.4; }
.banner span { flex: 1; }
.banner a { color: inherit; text-decoration: none; }

.toolbar { display: flex; align-items: center; height: 50px; padding-bottom: 2px; flex: none; color: #5c5c5c; }
.group { display: flex; align-items: center; height: 36px; border-right: 1px solid #d0d0d0; padding: 0 8px 0 7px; }
.group:first-child { padding-left: 8px; }
.toolbar .group > button { width: 39px; height: 36px; display: flex; align-items: center; justify-content: center; }
.toolbar .group > button svg { width: 20px; height: 20px; }
.toolbar .group > .has-menu { width: 48px; gap: 10px; padding-left: 7px; justify-content: flex-start; }
.toolbar .group > .has-menu .caret, .caret { width: 7px; height: 7px; }
.toolbar .off { color: #b9b9b9; }
.toolbar .heavy svg { stroke-width: 2; }
.toolbar .mid svg { stroke-width: 1.5; }
.toolbar .color-logo { width: 22px; height: 22px; }
.strong { stroke: #333; stroke-width: 2; }
.thick { stroke-width: 2; }
.toolbar .group > .pressed { width: 37px; margin-left: 3px; background: #e4e4e4; color: #222; }
.toolbar .group > .pressed svg { width: 18px; height: 18px; }
.select { position: relative; display: flex; align-items: center; border: 1px solid #c4c4c4; border-radius: 2px; background: #fafafa; color: #333; }
.select select { appearance: none; flex: 1; height: 100%; min-width: 0; }
.select svg:last-child { width: 8px; height: 8px; margin: 0 7px; color: #555; }
.fit { width: 128px; height: 29px; margin: 0 8px 0 10px; font-size: 17px; }
.fit select { padding-left: 8px; border-right: 1px solid #e0e0e0; }
.show-me { display: flex; align-items: center; gap: 6px; margin: 0 29px 0 auto; color: #111; font-size: 17px; }
.show-me svg { width: 14px; height: 16px; stroke: none; }

.workspace { position: relative; flex: 1; min-height: 0; display: flex; gap: 6px; padding-right: 6px; }
.data-pane { width: 262px; flex: none; display: flex; flex-direction: column; background: #fff; border: 1px solid var(--line); border-left: 0; border-bottom: 0; min-height: 0; }
.pane-tabs { display: flex; height: 32px; flex: none; color: #111; font-size: 17px; }
.pane-tabs button { flex: 1; display: flex; align-items: center; justify-content: space-between; padding: 0 7px 0 16px; border: 1px solid var(--line); border-width: 0 0 1px 1px; background: #fafafa; }
.pane-tabs .active { flex: 0 0 97px; padding: 0 0 1px 22px; border: 0; background: none; color: #000; font-size: 16px; font-weight: 600; }
.pane-tabs svg { width: 8px; height: 12px; stroke-width: 1.3; color: #444; }
.source { display: flex; align-items: center; gap: 6px; height: 37px; padding: 0 0 2px 23px; border-bottom: 1px solid #e2e2e2; color: #444; flex: none; }
.source svg { width: 18px; height: 18px; }
.find { display: flex; align-items: center; height: 46px; padding: 0 14px 0 10px; gap: 4px; flex: none; color: #555; }
.find-box { display: flex; align-items: center; width: 178px; height: 28px; padding: 0 8px; border: 1px solid #c2c2c2; border-radius: 2px; }
.find-box input { flex: 1; min-width: 0; outline: 0; }
.find-box svg { width: 10px; height: 10px; }
::placeholder { color: #999; opacity: 1; }
.find button svg { width: 14px; height: 14px; }
.find .views { display: flex; align-items: center; gap: 8px; height: 22px; margin-left: 1px; padding-left: 6px; border-left: 1px solid var(--line); }
.find .views svg { width: 13px; height: 10px; }
.find .views .caret { width: 8px; height: 8px; }
.data-pane h2 { height: 26px; padding: 0 22px; color: #000; font-size: 16px; font-weight: 600; line-height: 20px; flex: none; }
.field-area { flex: 1; min-height: 0; display: flex; }
.fields { flex: 1; min-width: 0; padding-left: 18px; overflow: hidden; color: #222; }
.fields li { display: flex; align-items: center; gap: 12px; height: 26px; padding-left: 7px; white-space: nowrap; }
.fields li svg { width: 13px; height: 12px; }
.fields li b { width: 17px; margin: 0 -2px; color: #3a7ca0; font-size: 9px; font-weight: 700; }
.dimensions { border-bottom: 1px solid #ddd; }
.dimensions svg { color: #36799d; }
.measures { padding-top: 1px; }
.measures svg { color: #2f9c74; }
.scroll-track { width: 20px; padding: 21px 0 0 8px; background: #efefef; }
.scroll-thumb { width: 3px; height: 77%; border-radius: 2px; background: #858585; }

.cards { width: 194px; flex: none; display: flex; flex-direction: column; gap: 6px; }
.card { border: 1px solid var(--line); background: #fafafa; }
.card h3 { padding: 7px; color: #444; }
.pages { height: 70px; }
.filters { height: 92px; }
.filters h3 { padding-bottom: 11px; }
.pill { display: block; height: 24px; padding: 0 13px; border-radius: 12px; background: #4996b2; color: #fff; text-align: left; white-space: nowrap; }
.green { background: #00b180; }
.filters .pill { width: 182px; margin: 0 5px; }
.marks { height: 349px; }
.marks h3 { padding-bottom: 15px; }
.mark-type { height: 24px; margin: 0 7px; padding-left: 11px; font-size: 14px; }
.mark-type .pie-glyph { width: 14px; height: 14px; }
.mark-type select { padding-left: 5px; border-right: 1px solid #e0e0e0; }
.mark-buttons { display: grid; grid-template-columns: repeat(3, 1fr); gap: 7px; margin: 7px; }
.mark-buttons button { display: flex; flex-direction: column; align-items: center; gap: 6px; height: 52px; padding-top: 8px; border: 1px solid var(--line); font-size: 12px; line-height: 17px; }
.mark-buttons svg { width: 18px; height: 18px; stroke-width: 1.2; }
.encodings { display: grid; gap: 3px; margin: 17px 12px 0 18px; }
.encodings li { display: flex; align-items: center; justify-content: space-between; }
.encodings svg { width: 14px; height: 14px; }
.encodings .pill { width: 142px; }

.view { flex: 1; min-width: 0; display: flex; flex-direction: column; gap: 6px; }
.shelf { height: 32px; flex: none; border: 1px solid var(--line); background: #fafafa; color: #444; }
.shelf-name { display: flex; align-items: center; gap: 8px; width: 159px; height: 30px; padding-left: 7px; border-right: 1px solid var(--line); }
.shelf-name svg { width: 12px; height: 12px; stroke-width: 2; }
.view-body { flex: 1; min-height: 0; display: flex; gap: 6px; padding-bottom: 6px; }
.canvas { flex: 1; min-width: 0; display: flex; flex-direction: column; border: 1px solid #b3b3b3; background: var(--cream); }
.canvas h2 { padding-top: 13px; color: #000; font: 400 27px/34px "Noto Sans", sans-serif; text-align: center; }
.plot { flex: 1; min-height: 0; display: grid; place-items: center; }
.pie { width: 440px; height: 440px; }
.slices { stroke: #111; stroke-width: 1; }
.labels { fill: #222; stroke: none; text-anchor: middle; }
.legends { width: 194px; flex: none; display: flex; flex-direction: column; gap: 6px; }
.legend { border: 1px solid var(--line); background: var(--cream); color: #444; }
.legend h3 { height: 35px; padding: 7px; background: #fafafa; white-space: nowrap; }
.legend ul { padding-bottom: 1px; }
.legend li { display: flex; align-items: center; gap: 5px; height: 21px; padding-left: 4px; }
.legend i { width: 13px; height: 13px; border: 1px solid #000; }
.s41 { background: #4e79a7; } .s50 { background: #f28e2b; } .s51 { background: #e15759; } .s56 { background: #76b7b2; } .s59 { background: #59a14f; }
.s63 { background: #edc948; } .s64 { background: #b07aa1; } .s68 { background: #ff9da7; } .s71 { background: #9c755f; } .s76 { background: #bab0ac; }
.size-key { display: flex; align-items: center; gap: 3px; height: 22px; padding: 0 0 2px 4px; }
.size-key span { width: 82px; height: 20px; border: 2px solid #b3b3b3; border-width: 0 2px; border-radius: 4px / 20px; background: #d7d7d7; }
.dock-tab { position: absolute; right: 0; bottom: 0; width: 31px; height: 65px; }
.dock-shape { width: 31px; height: 65px; fill: #fff; stroke: #b9c4d0; }
.dock-icon { position: absolute; left: 6px; top: 9px; width: 21px; height: 21px; stroke: none; }

.sheet-tabs { display: flex; height: 37px; flex: none; border-top: 1px solid #c8c8c8; background: #e5e5e5; color: #555; font-size: 15px; }
.sheet-tabs button { display: flex; align-items: center; gap: 5px; min-width: 71px; padding: 0 11px 0 7px; border-right: 1px solid #c8c8c8; white-space: nowrap; }
.sheet-tabs svg { width: 12px; height: 14px; }
.sheet-tabs .wide { width: 163px; padding-left: 9px; gap: 4px; }
.sheet-tabs .active { background: #fafafa; padding-right: 6px; font-weight: 600; }
.sheet-tabs .new { min-width: 32px; padding-right: 7px; }
.sheet-tabs .new svg { width: 16px; height: 16px; }
.sheet-tabs .strong { stroke: #555; }
.status { display: flex; align-items: center; gap: 21px; height: 27px; flex: none; padding-left: 4px; border: 1px solid #d0d0d0; border-width: 1px 0; border-bottom-color: #bbb; background: #ebebeb; color: #222; font-size: 13px; }
.status span { padding-bottom: 1px; }
.status-cells { display: flex; height: 100%; margin-left: auto; color: #b5b5b5; }
.status-cells > div { border-left: 1px solid #c8c8c8; display: flex; align-items: center; }
.c1 { width: 157px; } .c2 { width: 32px; } .c3 { width: 57px; }
.status-cells .pager { width: 71px; padding-left: 8px; gap: 8px; }
.status-cells .sorter { width: 70px; padding-left: 8px; gap: 11px; }
.pager svg { width: 8px; height: 8px; fill: currentColor; stroke: none; }
.sorter svg { width: 11px; height: 11px; fill: currentColor; stroke: none; }
.sorter .on { color: #666; }

.taskbar { display: grid; grid-template-columns: 1fr auto 1fr; align-items: center; height: 59px; padding-bottom: 1px; flex: none; background: #eee; color: #1b1b1b; font-size: 14px; }
.weather { display: flex; align-items: center; gap: 3px; padding-left: 27px; text-align: left; }
.weather > svg { width: 34px; height: 40px; stroke: none; }
.weather text, .spill text { fill: #fff; font-size: 13px; text-anchor: middle; }
.weather b, .weather small { display: block; font-size: 14px; font-weight: 400; }
.weather small { color: #5a5a5a; }
.apps { display: flex; align-items: center; }
.apps button { position: relative; width: 55px; height: 48px; display: grid; place-items: center; }
.apps button svg { width: 30px; height: 30px; overflow: visible; stroke: none; }
.task-search { display: flex; align-items: center; width: 274px; height: 40px; margin: 0 4px; padding: 0 6px 0 15px; border: 1px solid #d2d2d2; border-radius: 20px; background: #fbfbfb; color: #222; font-size: 16px; }
.task-search input { flex: 1; min-width: 0; padding-left: 14px; outline: 0; }
.task-search ::placeholder { color: #5a5a5a; }
.glass { width: 18px; height: 18px; stroke-width: 2; }
.moon { width: 57px; height: 34px; stroke: none; }
.running::after { content: ""; position: absolute; left: 50%; bottom: 0; width: 8px; height: 4px; margin-left: -4px; border-radius: 2px; background: #858585; }
.apps .current svg { position: relative; width: 27px; height: 27px; }
.current::before { content: ""; position: absolute; inset: 0 3px; border: 1px solid #e9e9e9; border-radius: 5px; background: #f9f9f9; }
.current::after { width: 20px; margin-left: -10px; background: #0078d7; }
.tray { display: flex; align-items: center; justify-content: flex-end; padding-right: 26px; }
.tray svg { width: 18px; height: 20px; stroke-width: 1.4; }
.tray > button:first-child svg { width: 14px; height: 14px; stroke-width: 2; }
.lang { margin: 0 22px 0 26px; }
.quick { display: flex; gap: 9px; }
.tray .quick svg { width: 20px; height: 16px; }
.clock { margin: 0 11px 0 24px; text-align: right; }
```
